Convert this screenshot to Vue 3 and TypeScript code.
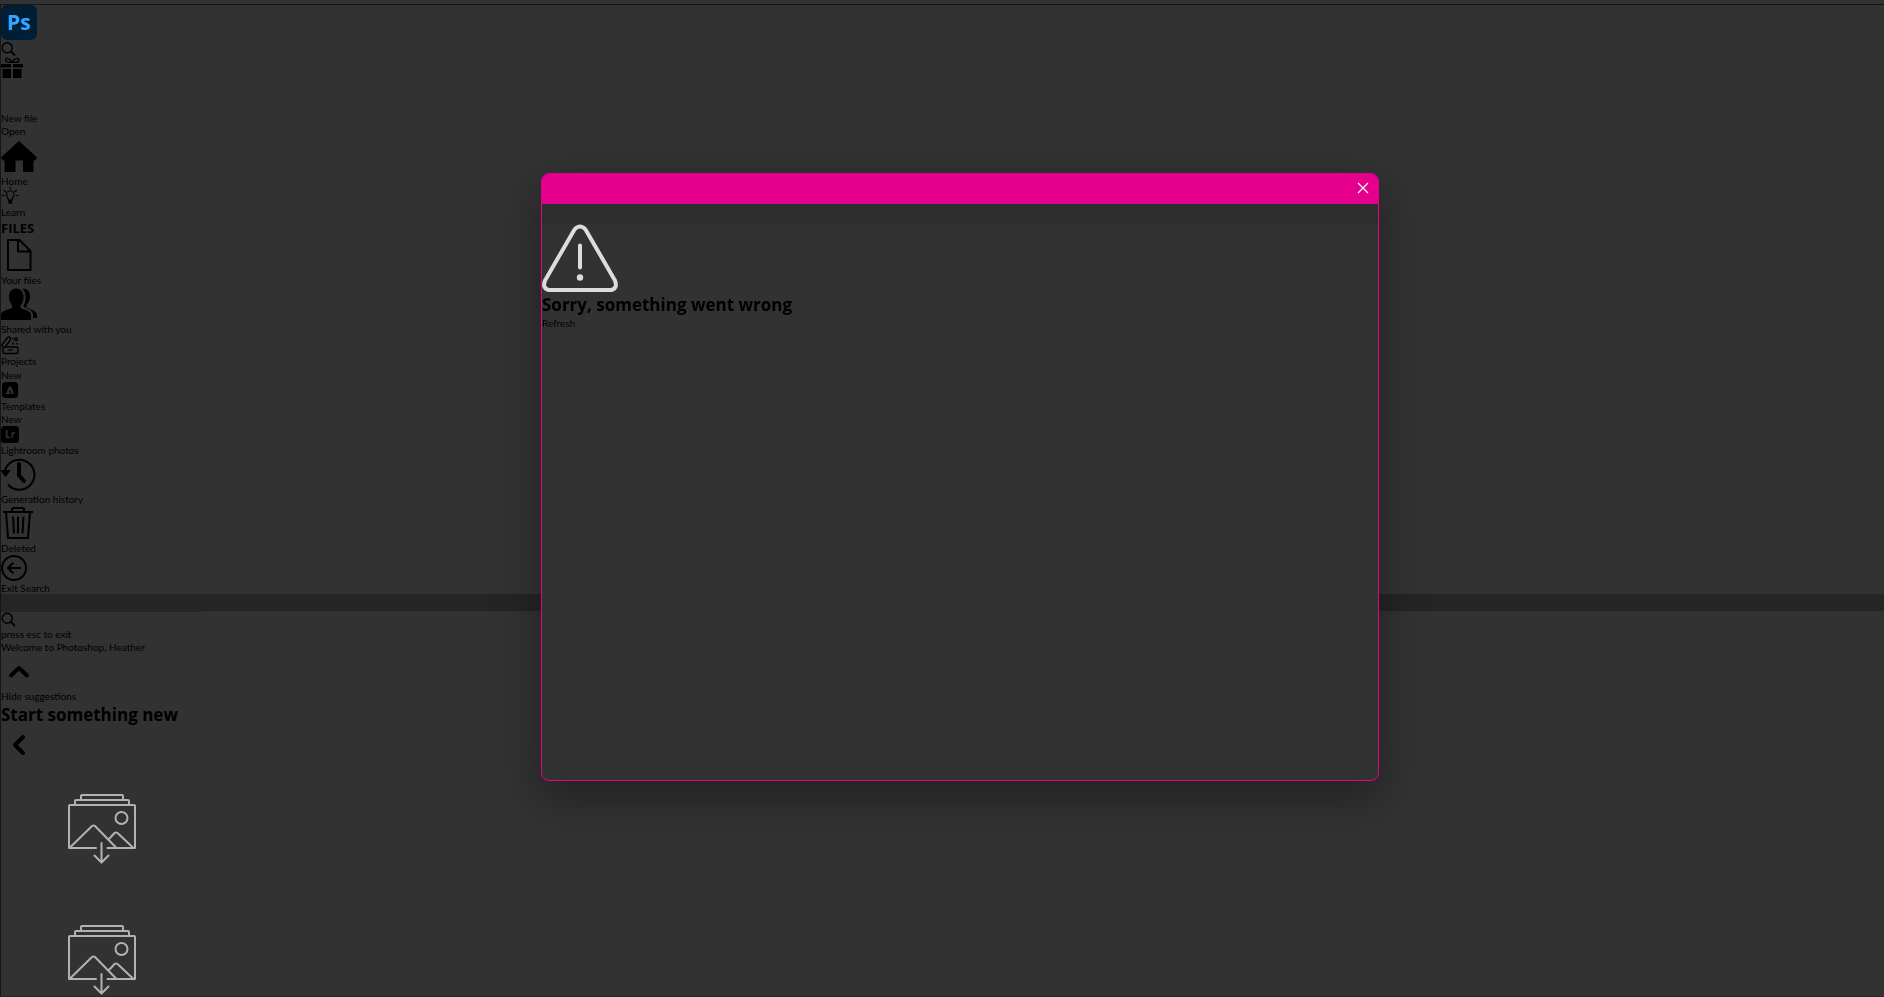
<script setup lang="ts">
import { ref } from 'vue'

const query = ref('')
const suggestions = [1, 2]
</script>

<template>
  <div class="page">
    <div class="frame">
      <header>
        <svg class="logo" viewBox="0 0 36 36" role="img" aria-label="Photoshop">
          <rect width="36" height="35" rx="6" fill="#001e36" />
          <text x="6" y="25" class="ps">Ps</text>
        </svg>
        <button class="row" aria-label="Search">
          <svg class="magnifier" viewBox="0 0 15 16">
            <circle cx="6.2" cy="6.7" r="5" fill="none" stroke="currentColor" stroke-width="1.4" />
            <path d="M9.8 10.3L14 14.5" stroke="currentColor" stroke-width="1.8" />
          </svg>
        </button>
        <button class="row gift-row" aria-label="What's new">
          <svg class="gift" viewBox="0 0 22 22">
            <path d="M0 7h10v3.500H0zM12 7h10v3.500H12zM1.500 12H10v9H1.500zM12 12h8.500v9H12z" fill="currentColor" />
            <path d="M11 5C9 1 4.500 .5 4.500 3S8 5.500 11 5C13 1 18 .5 18 3S14 5.500 11 5z" fill="none" stroke="currentColor" stroke-width="1.400" />
          </svg>
        </button>
      </header>

      <nav>
        <button class="row">New file</button>
        <button class="row">Open</button>
        <button class="row">
          <svg class="large spaced" viewBox="0 0 36 36">
            <path d="M18 3.500L35.500 19.500 34 22H32v11.500H22.500V22H14v11.500H4V22H2L.5 19.500z" fill="currentColor" stroke="currentColor" stroke-width="1" stroke-linejoin="round" />
          </svg>
          <span>Home</span>
        </button>
        <button class="row">
          <svg class="small" viewBox="0 0 18 18">
            <path d="M7.500 12.500C7.500 9.800 5.500 9.500 5.500 6.500A3.700 3.700 0 0 1 13 6.500C13 9.500 11 9.800 11 12.500z" fill="none" stroke="currentColor" stroke-width="1.200" />
            <path d="M7.300 11.500h3.900v3.500L9.900 16H8.600L7.300 15z" fill="currentColor" />
            <path d="M9.300 -1v2M2.800 2l2 2M15.800 2l-2 2M1 7.500h2.800M14.800 7.500h2.800" stroke="currentColor" stroke-width="1.200" />
          </svg>
          <span>Learn</span>
        </button>

        <h2 class="section">FILES</h2>
        <button class="row">
          <svg class="large spaced" viewBox="0 0 36 36">
            <path d="M7 3H18.500L29.500 14V33H7zM17 3v11.500H29" fill="none" stroke="currentColor" stroke-width="2" stroke-linejoin="round" />
          </svg>
          <span>Your files</span>
        </button>
        <button class="row">
          <svg class="large" viewBox="0 0 36 36">
            <path d="M15 1.500C10 1.500 8 5.500 8 10C8 14 10 17 11 18.500V21C6 23 0 24 0 28V33H30V28C30 24 24 23 19.500 21V18.500C21 17 22.500 14 22.500 10C22.500 5.500 20 1.500 15 1.500z" fill="currentColor" />
            <path d="M21.500 2C27 1 29 5.500 29 9.500C29 14 26.500 16.500 25.500 18V20.500C30 22.500 36 24 36 28.500V31H32V28C32 23 27 22 22.500 19.500V18.500C26 13 25 5 21.500 2z" fill="currentColor" />
          </svg>
          <span>Shared with you</span>
        </button>
        <button class="row">
          <svg class="small projects" viewBox="0 0 18 19">
            <g fill="none" stroke="currentColor" stroke-width="1.400" stroke-linejoin="round">
              <rect x="2" y="11" width="15" height="6.500" rx="1.500" />
              <path d="M2 11C0 10 1 8.500 2 7.500L6.500 1.500Q8 .5 9.200 2T9 4.500L4.500 10.500M7.500 14h4" />
              <circle cx="15" cy="3.300" r="1.400" />
            </g>
            <path d="M11 6.500h2v2h-2zM15 7h1.500v1.500H15zM11 2h1.200v1.200H11z" fill="currentColor" />
          </svg>
          <span>Projects</span>
          <span class="tag">New</span>
        </button>
        <button class="row">
          <svg class="small" viewBox="0 0 18 18">
            <rect x="1" y="0" width="16" height="16" rx="3.500" fill="currentColor" />
            <path d="M5 12L8 4.500h2L13 12h-2.200L9 7.500 7.800 10.500H9.300L9.800 12z" fill="#323232" />
          </svg>
          <span>Templates</span>
          <span>New</span>
        </button>
        <button class="row">
          <svg class="small" viewBox="0 0 18 18">
            <rect x="0" y="0" width="18" height="17" rx="3.500" fill="currentColor" />
            <text x="4" y="12" class="lr">Lr</text>
          </svg>
          <span>Lightroom photos</span>
        </button>
        <button class="row">
          <svg class="large" viewBox="0 0 36 36">
            <path d="M3.500 16A15 15 0 1 1 7 27.500" fill="none" stroke="currentColor" stroke-width="2" />
            <path d="M0 13.500H9L4.500 19.500z" fill="currentColor" stroke="currentColor" stroke-linejoin="round" />
            <path d="M18 7v11.500l5 5.500" fill="none" stroke="currentColor" stroke-width="4" stroke-linecap="round" stroke-linejoin="round" />
          </svg>
          <span>Generation history</span>
        </button>
        <button class="row">
          <svg class="large" viewBox="0 0 36 36">
            <path d="M2 6H32M11 6V3.500Q11 2 12.500 2H21.500Q23 2 23 3.500V6M5 6L7 32H27L29 6M12 10.500L13 27.500M17 10.500V27.500M22.500 10.500L21.500 27.500" fill="none" stroke="currentColor" stroke-width="2" />
          </svg>
          <span>Deleted</span>
        </button>
        <button class="row">
          <svg class="medium" viewBox="0 0 27 27">
            <circle cx="13" cy="13" r="12" fill="none" stroke="currentColor" stroke-width="2" />
            <path d="M20 13H7M12.500 7.500L7 13L12.500 18.500" fill="none" stroke="currentColor" stroke-width="2" />
          </svg>
          <span>Exit Search</span>
        </button>
      </nav>

      <main>
        <div class="searchbar"><input v-model="query" type="search" aria-label="Search files" /></div>
        <svg class="magnifier lower" viewBox="0 0 15 16">
          <circle cx="6.200" cy="6.200" r="5" fill="none" stroke="currentColor" stroke-width="1.400" />
          <path d="M9.800 9.800L14 14" stroke="currentColor" stroke-width="1.800" />
        </svg>
        <p>press esc to exit</p>
        <p>Welcome to Photoshop, Heather</p>
        <button class="row">
          <svg class="large" viewBox="0 0 36 36">
            <path d="M10 21.500L18 14L26 21.500" fill="none" stroke="currentColor" stroke-width="4" stroke-linecap="round" stroke-linejoin="round" />
          </svg>
          <span>Hide suggestions</span>
        </button>
        <h1>Start something new</h1>
        <button class="row" aria-label="Previous">
          <svg class="large" viewBox="0 0 36 36">
            <path d="M22 10L14 18L22 26" fill="none" stroke="currentColor" stroke-width="4" stroke-linecap="round" stroke-linejoin="round" />
          </svg>
        </button>
        <div class="cards">
          <svg v-for="n in suggestions" :key="n" class="card" viewBox="0 0 68 70">
            <g fill="none" stroke="#b2b2b2" stroke-width="2" stroke-linejoin="round" stroke-linecap="round">
              <path d="M28 54H1V12Q1 11 2 11H66Q67 11 67 12V54H39.500" />
              <path d="M7 11V7Q7 6 8 6H60Q61 6 61 7V11M13 6V2Q13 1 14 1H54Q55 1 55 2V6" />
              <circle cx="53.500" cy="24" r="6" />
              <path d="M2 53.500L24 32Q25.500 31 27 32L48 53.500M41 45L46.500 39Q48 38 49.500 39L65 53.500M33.500 49V68M26.500 61.500L33.500 68.500L40.500 61.500" />
            </g>
          </svg>
        </div>
      </main>
    </div>

    <div class="overlay">
      <section class="dialog" role="alertdialog" aria-labelledby="error-title">
        <div class="titlebar">
          <button class="close" aria-label="Close">
            <svg viewBox="0 0 12 12"><path d="M1 1L11 11M11 1L1 11" stroke="#fff" stroke-width="1.200" /></svg>
          </button>
        </div>
        <div class="strip"></div>
        <svg class="warning" viewBox="0 0 76 68">
          <path d="M32.500 5Q38 -1 43.500 5L73 56Q76 64 69 65.500H7Q0 64 3 56z" fill="none" stroke="#dcdcdc" stroke-width="4" stroke-linejoin="round" />
          <path d="M38 21V43" stroke="#dcdcdc" stroke-width="4" stroke-linecap="round" />
          <circle cx="38" cy="53" r="3.200" fill="#dcdcdc" />
        </svg>
        <h1 id="error-title">Sorry, something went wrong</h1>
        <button class="row">Refresh</button>
      </section>
    </div>
  </div>
</template>

<style>
body {
  margin: 0;
  background: #323232;
}
</style>

<style scoped>
.page {
  height: 100vh;
  overflow: hidden;
  display: flex;
  flex-direction: column;
  box-sizing: border-box;
  padding-top: 4px;
  background: #323232;
  color: #000;
  font-family: Lato, "Open Sans", sans-serif;
  font-size: 10px;
  line-height: 13px;
}
.frame {
  flex: 1;
  min-height: 0;
  overflow: hidden;
  border: 1px solid #161616;
  border-right: 0;
  border-bottom-color: #2b282a;
}
header,
nav,
main {
  display: flex;
  flex-direction: column;
}
main {
  margin-top: -1px;
}
svg {
  display: block;
  flex: none;
  overflow: visible;
}
button {
  border: 0;
  padding: 0;
  background: none;
  color: inherit;
  font: inherit;
}
.row {
  display: flex;
  flex-direction: column;
  align-items: flex-start;
  text-align: left;
}
p,
h1,
h2 {
  margin: 0;
}
h1,
h2 {
  font-family: "Open Sans", "Noto Sans", sans-serif;
}
.logo {
  width: 36px;
  height: 36px;
}
.ps {
  fill: #31a8ff;
  font: 700 21px "Open Sans", sans-serif;
}
.lr {
  fill: #323232;
  font: 700 10px "Open Sans", sans-serif;
}
.magnifier {
  width: 15px;
  height: 16px;
}
.gift {
  width: 22px;
  height: 22px;
}
.gift-row {
  height: 55px;
}
.large {
  width: 36px;
  height: 36px;
}
.spaced {
  margin-bottom: 1px;
}
.medium {
  width: 27px;
  height: 27px;
}
.small {
  width: 18px;
  height: 18px;
}
.projects {
  height: 19px;
}
.tag {
  line-height: 14px;
}
.section {
  font-size: 13px;
  line-height: 18px;
}
.searchbar {
  height: 17px;
  background: #252525;
}
input {
  display: block;
  box-sizing: border-box;
  width: 200px;
  height: 18px;
  padding: 0;
  border: 0;
  outline: 0;
  background: #252525;
  color: #000;
  font: inherit;
}
.lower {
  margin-top: 1px;
}
h1 {
  font-size: 17px;
  line-height: 24px;
}
.cards {
  display: flex;
  flex-direction: column;
  gap: 61px;
  padding: 31px 67px 0;
}
.card {
  width: 68px;
  height: 70px;
}
.overlay {
  position: fixed;
  inset: 0;
  display: grid;
  place-items: center;
  padding: 0 0 43px 36px;
}
.dialog {
  box-sizing: border-box;
  width: min(838px, 100%);
  min-height: 608px;
  overflow: hidden;
  border: 1px solid #e4008c;
  border-radius: 8px;
  background: #323232;
  box-shadow: 0 16px 48px rgba(0, 0, 0, 0.35);
}
.titlebar {
  display: flex;
  align-items: flex-start;
  justify-content: flex-end;
  box-sizing: border-box;
  height: 30px;
  padding: 8px 9px 0 0;
  background: #e4008c;
}
.close svg {
  width: 12px;
  height: 12px;
}
.strip {
  height: 20px;
  background: #2d2d2d;
}
.warning {
  width: 76px;
  height: 69px;
}
</style>
